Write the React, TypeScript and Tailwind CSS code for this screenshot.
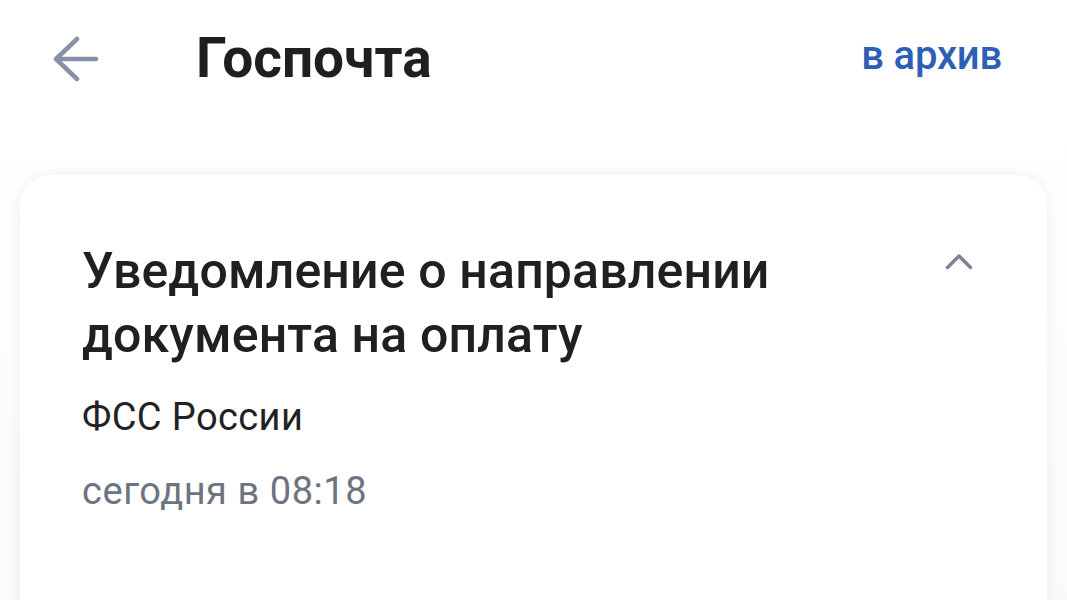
import React from 'react';

const BackArrow = () => (
  <svg width="46" height="46" viewBox="0 0 46 46" fill="none" stroke="#8791a7" strokeWidth="4.5" strokeLinecap="round" strokeLinejoin="round">
    <path d="M43 23H4" />
    <path d="M24 3L3 23l21 20" />
  </svg>
);

const ChevronUp = () => (
  <svg width="30" height="20" viewBox="0 0 30 20" fill="none" stroke="#7d8393" strokeWidth="3.5" strokeLinecap="round" strokeLinejoin="round">
    <path d="M3.5 15.5L15 4l11.5 11.5" />
  </svg>
);

export default function App() {
  return (
    <div className="w-[1067px] h-[600px] overflow-hidden bg-[#fafafa]" style={{ fontFamily: 'Roboto, "Noto Sans", sans-serif' }}>
      <header className="h-[120px] flex items-center pl-[53px] pr-[65px] bg-white">
        <div className="flex items-center -mt-[2px]">
          <BackArrow />
        </div>
        <h1 className="ml-[97px] text-[55px] font-bold text-[#1f1f1f] leading-none -mt-[4px]">Госпочта</h1>
        <button className="ml-auto text-[40px] font-medium text-[#2d5fb5] leading-none -mt-[8px] tracking-[-0.2px]">в архив</button>
      </header>
      <div className="pt-[55px] px-[20px] bg-gradient-to-b from-white to-[#fafafa]">
        <div className="bg-white rounded-[30px] shadow-[0_0_14px_rgba(0,0,0,0.07)] pl-[62px] pr-[73px] pt-[64px] pb-[120px] flex">
          <div className="flex-1">
            <h2 className="text-[50px] font-medium text-[#202020] leading-[64px] tracking-[0.15px]">
              Уведомление о направлении<br />документа на оплату
            </h2>
            <p className="mt-[31px] text-[38px] text-[#222] leading-none tracking-[0.4px]">ФСС России</p>
            <p className="mt-[36px] text-[38px] text-[#6c7482] leading-none tracking-[0.55px]">сегодня в 08:18</p>
          </div>
          <div className="pt-[13px]">
            <ChevronUp />
          </div>
        </div>
      </div>
    </div>
  );
}
